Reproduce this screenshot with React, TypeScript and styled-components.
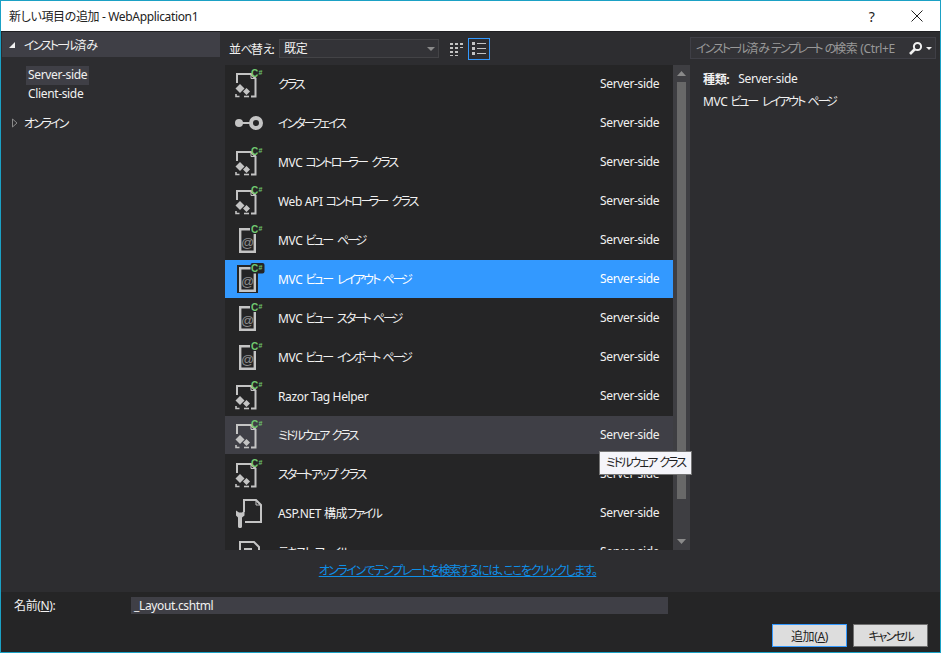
import { FC } from "react";
import styled, { createGlobalStyle } from "styled-components";

type Kind = "class" | "iface" | "view" | "config" | "text";

const items: { id: number; name: string; kind: Kind; state?: "selected" | "hover" }[] = [
  { id: 1, name: "クラス", kind: "class" },
  { id: 2, name: "インターフェイス", kind: "iface" },
  { id: 3, name: "MVC コントローラー クラス", kind: "class" },
  { id: 4, name: "Web API コントローラー クラス", kind: "class" },
  { id: 5, name: "MVC ビュー ページ", kind: "view" },
  { id: 6, name: "MVC ビュー レイアウト ページ", kind: "view", state: "selected" },
  { id: 7, name: "MVC ビュー スタート ページ", kind: "view" },
  { id: 8, name: "MVC ビュー インポート ページ", kind: "view" },
  { id: 9, name: "Razor Tag Helper", kind: "class" },
  { id: 10, name: "ミドルウェア クラス", kind: "class", state: "hover" },
  { id: 11, name: "スタートアップ クラス", kind: "class" },
  { id: 12, name: "ASP.NET 構成ファイル", kind: "config" },
  { id: 13, name: "テキスト ファイル", kind: "text" },
];

const GlobalStyle = createGlobalStyle`
  html, body { margin: 0; padding: 0; background: #2d2d30; }
  body {
    font-family: "Noto Sans", "Noto Sans CJK JP", sans-serif;
    font-size: 12px;
    font-feature-settings: "palt";
    letter-spacing: -0.35px;
  }
`;

// the dialog font has narrow kana, so runs of kana are set tighter than latin text
const Kana = styled.span<{ $long?: boolean }>`
  letter-spacing: ${({ $long }) => ($long ? "-3.5px" : "-2px")};
  word-spacing: ${({ $long }) => ($long ? "6.5px" : "2px")};
`;

const Jp: FC<{ text: string }> = ({ text }) => (
  <>
    {text
      .split(/(ー ?|[\u3040-\u30fb\u30fd-\u30ff][\u3040-\u30fb\u30fd-\u30ff ]*)/)
      .map((part, i) => (i % 2 ? <Kana key={i} $long={part[0] === "ー"}>{part}</Kana> : part))}
  </>
);

const Sharp = styled.text`
  font-family: "Liberation Sans", sans-serif;
  font-weight: 700;
  letter-spacing: 0;
  fill: #70c870;
`;

const Badge: FC<{ selected?: boolean }> = ({ selected }) => (
  <>
    {selected && <rect x="18.5" y="2" width="14" height="10.5" rx="2" fill="#252526" />}
    <Sharp x="19" y="10.5" fontSize="10">C</Sharp>
    <Sharp x="26.5" y="8.5" fontSize="7">#</Sharp>
  </>
);

const ItemIcon: FC<{ kind: Kind; selected?: boolean }> = ({ kind, selected }) => {
  if (kind === "iface") {
    return (
      <Glyph viewBox="0 0 36 37">
        <circle cx="7" cy="18" r="4" fill="#c4c4c4" />
        <rect x="10" y="17" width="8" height="2" fill="#c4c4c4" />
        <circle cx="24" cy="18" r="5" fill="none" stroke="#c4c4c4" strokeWidth="4" />
      </Glyph>
    );
  }
  if (kind === "view") {
    return (
      <Glyph viewBox="0 0 36 37">
        {selected && <rect x="5" y="4" width="21" height="28" fill="#252526" />}
        <path d="M8.2 7.2H22.8V29.8H8.2Z" fill={selected ? "#252526" : "none"} stroke="#c4c4c4" strokeWidth="2.4" />
        {!selected && <rect x="18" y="3" width="14" height="9" fill="#252526" />}
        <AtSign x="15.5" y="24.5" textAnchor="middle" fontSize="13">@</AtSign>
        <Badge selected={selected} />
      </Glyph>
    );
  }
  if (kind === "config") {
    return (
      <Glyph viewBox="0 0 36 37">
        <path d="M12 17V5H24L29 10V27H13" fill="none" stroke="#c4c4c4" strokeWidth="2" />
        <path d="M24 5V10H29" fill="none" stroke="#c4c4c4" strokeWidth="1" />
        <path
          d="M4 15.5V20.5L6 22.5V31.5C6 33.5 10 33.5 10 31.5V22.5L12.5 20.5V15.5L10 17.5H7L4 15.5Z"
          fill="#c4c4c4"
        />
      </Glyph>
    );
  }
  if (kind === "text") {
    return (
      <Glyph viewBox="0 0 36 37">
        <path d="M8 36V8H22L27 13V36" fill="none" stroke="#c4c4c4" strokeWidth="2" />
        <path d="M12 15H20M12 19H23" stroke="#c4c4c4" strokeWidth="2" />
      </Glyph>
    );
  }
  return (
    <Glyph viewBox="0 0 36 37">
      <path d="M5 17V8H19L23.5 12.5V30.5H19" fill="none" stroke="#c4c4c4" strokeWidth="2" />
      <path d="M19 8V12.5H23.5" fill="none" stroke="#c4c4c4" strokeWidth="1" />
      <path d="M8 18L12.5 22.5L8 27L3.5 22.5Z" fill="#c4c4c4" />
      <path d="M14.5 22L18 25.5L14.5 29L11 25.5Z" fill="#c4c4c4" />
      <path d="M12 30.5H17" fill="none" stroke="#c4c4c4" strokeWidth="1.6" />
      <path d="M4 28V30.5H7.5" fill="none" stroke="#c4c4c4" strokeWidth="1.6" />
      <Badge selected={selected} />
    </Glyph>
  );
};

export default function App() {
  return (
    <>
      <GlobalStyle />
      <Window>
        <TitleBar>
          <Title>新しい項目の追加 - WebApplication1</Title>
          <TitleButton $wide>?</TitleButton>
          <TitleButton>
            <svg width="12" height="12" viewBox="0 0 12 12">
              <path d="M0.5 0.5L11.5 11.5M11.5 0.5L0.5 11.5" stroke="#222" strokeWidth="1" />
            </svg>
          </TitleButton>
        </TitleBar>

        <Body>
          <Sidebar>
            <TreeHeader>
              <svg width="8" height="8" viewBox="0 0 8 8">
                <path d="M7 1V7H1Z" fill="#f1f1f1" />
              </svg>
              <span><Jp text="インストール済み" /></span>
            </TreeHeader>
            <SubTree>
              <SubItem $active>Server-side</SubItem>
              <SubItem>Client-side</SubItem>
            </SubTree>
            <TreeRow>
              <svg width="8" height="10" viewBox="0 0 8 10">
                <path d="M1.5 1L6 5L1.5 9Z" fill="none" stroke="#8a8a8a" />
              </svg>
              <span><Jp text="オンライン" /></span>
            </TreeRow>
          </Sidebar>

          <Center>
            <Toolbar>
              <SortLabel><Jp text="並べ替え:" /></SortLabel>
              <SortSelect>
                既定
                <Caret />
              </SortSelect>
              <ViewButton>
                <svg width="16" height="16" viewBox="0 0 16 16" fill="#c4c4c4">
                  <path d="M1 2h3v2H1zM6 2h3v2H6zM11 2h3v2h-3zM1 6h3v2H1zM6 6h3v2H6zM11 6h3v1h-3zM1 10h3v2H1zM6 10h3v2H6zM1 14h3v1H1zM6 14h3v1H6z" />
                </svg>
              </ViewButton>
              <ViewButton $active>
                <svg width="16" height="16" viewBox="0 0 16 16" fill="#c4c4c4">
                  <path d="M1 1h3v3H1zM1 6h3v3H1zM1 11h3v3H1zM6 2h9v1H6zM6 7h9v1H6zM6 12h9v1H6z" />
                </svg>
              </ViewButton>
            </Toolbar>

            <ListArea>
              <List>
                {items.map(({ id, name, kind, state }) => (
                  <Row key={id} $state={state}>
                    <ItemIcon kind={kind} selected={state === "selected"} />
                    <RowName><Jp text={name} /></RowName>
                    <RowType>Server-side</RowType>
                  </Row>
                ))}
              </List>
              <Scrollbar>
                <ScrollArrow viewBox="0 0 9 5">
                  <path d="M4.5 0L9 5H0Z" fill="#8a8a8a" />
                </ScrollArrow>
                <Thumb />
                <ScrollArrow viewBox="0 0 9 5">
                  <path d="M0 0H9L4.5 5Z" fill="#8a8a8a" />
                </ScrollArrow>
              </Scrollbar>
            </ListArea>

            <LinkRow>
              <OnlineLink href="#">オンラインでテンプレートを検索するには、ここをクリックします。</OnlineLink>
            </LinkRow>
          </Center>

          <Details>
            <SearchBox>
              <SearchText><Jp text="インストール済み テンプレート の検索 (Ctrl+E" /></SearchText>
              <svg width="15" height="15" viewBox="0 0 15 15">
                <circle cx="9.5" cy="5.5" r="3.6" fill="none" stroke="#f1f1f1" strokeWidth="2" />
                <path d="M7 8L2 13" stroke="#f1f1f1" strokeWidth="2.6" />
              </svg>
              <SearchCaret />
            </SearchBox>
            <DetailText>
              <DetailLine>
                <b>種類:</b>
                <span>Server-side</span>
              </DetailLine>
              <DetailLine>
                <span><Jp text="MVC ビュー レイアウト ページ" /></span>
              </DetailLine>
            </DetailText>
          </Details>
        </Body>

        <Footer>
          <NameRow>
            <NameLabel>
              名前(<u>N</u>):
            </NameLabel>
            <NameInput>_Layout.cshtml</NameInput>
          </NameRow>
          <Buttons>
            <DialogButton $primary>
              追加(<u>A</u>)
            </DialogButton>
            <DialogButton><Jp text="キャンセル" /></DialogButton>
          </Buttons>
        </Footer>

        <Tooltip><Jp text="ミドルウェア クラス" /></Tooltip>
      </Window>
    </>
  );
}

const Window = styled.div`
  position: relative;
  box-sizing: border-box;
  width: 941px;
  height: 653px;
  border: 1px solid #1ba1c5;
  background: #2d2d30;
  color: #f1f1f1;
  overflow: hidden;
  display: flex;
  flex-direction: column;
`;

const TitleBar = styled.div`
  height: 30px;
  flex: none;
  background: #fff;
  color: #222;
  display: flex;
  align-items: center;
  padding-left: 8px;
`;

const Title = styled.div`
  flex: 1;
  font-size: 12px;
`;

const TitleButton = styled.div<{ $wide?: boolean }>`
  width: 45px;
  height: 30px;
  display: flex;
  align-items: center;
  justify-content: center;
  font-size: 14px;
  margin-right: ${({ $wide }) => ($wide ? "0" : "1px")};
`;

const Body = styled.div`
  height: 561px;
  flex: none;
  display: flex;
  border-top: 1px solid #1f1f22;
  box-sizing: border-box;
`;

const Sidebar = styled.aside`
  width: 219px;
  flex: none;
  padding-left: 1px;
  box-sizing: border-box;
`;

const TreeHeader = styled.div`
  height: 25px;
  background: #3f3f46;
  display: flex;
  align-items: center;
  gap: 8px;
  padding-left: 6px;
`;

const SubTree = styled.div`
  padding: 9px 0 0 24px;
  display: flex;
  flex-direction: column;
  align-items: flex-start;
`;

const SubItem = styled.div<{ $active?: boolean }>`
  height: 19px;
  line-height: 18px;
  padding: 0 2px;
  background: ${({ $active }) => ($active ? "#3f3f46" : "transparent")};
`;

const TreeRow = styled.div`
  display: flex;
  align-items: center;
  gap: 5px;
  padding: 9px 0 0 9px;
  height: 19px;
`;

const Center = styled.main`
  width: 470px;
  flex: none;
  display: flex;
  flex-direction: column;
`;

const Toolbar = styled.div`
  height: 33px;
  flex: none;
  display: flex;
  align-items: center;
  padding-left: 9px;
`;

const SortLabel = styled.span`
  width: 50px;
  white-space: nowrap;
`;

const SortSelect = styled.div`
  position: relative;
  box-sizing: border-box;
  width: 160px;
  height: 19px;
  line-height: 17px;
  padding-left: 4px;
  background: #333337;
  border: 1px solid #434346;
  margin-right: 7px;
`;

const Caret = styled.i`
  position: absolute;
  right: 3px;
  top: 7px;
  border: 4px solid transparent;
  border-top-color: #8a8a8a;
  border-bottom: 0;
`;

const ViewButton = styled.div<{ $active?: boolean }>`
  box-sizing: border-box;
  width: 22px;
  height: 22px;
  display: flex;
  align-items: center;
  justify-content: center;
  border: 1px solid ${({ $active }) => ($active ? "#3399ff" : "transparent")};
`;

const ListArea = styled.div`
  height: 485px;
  flex: none;
  display: flex;
  padding-left: 5px;
`;

const List = styled.div`
  width: 448px;
  height: 485px;
  overflow: hidden;
  background: #252526;
`;

const Row = styled.div<{ $state?: "selected" | "hover" }>`
  height: 38px;
  margin-bottom: 1px;
  display: flex;
  align-items: center;
  padding-left: 7px;
  color: ${({ $state }) => ($state === "selected" ? "#fff" : "#f1f1f1")};
  background: ${({ $state }) =>
    $state === "selected" ? "#3399ff" : $state === "hover" ? "#3f3f46" : "transparent"};
`;

const Glyph = styled.svg`
  width: 36px;
  height: 37px;
  margin-top: 1px;
  flex: none;
`;

const AtSign = styled.text`
  font-family: "Liberation Sans", sans-serif;
  letter-spacing: 0;
  fill: #8f8f8f;
`;

const RowName = styled.span`
  margin-left: 10px;
  flex: 1;
`;

const RowType = styled.span`
  width: 73px;
  flex: none;
  margin-bottom: 2px;
`;

const Scrollbar = styled.div`
  width: 17px;
  flex: none;
  background: #3e3e42;
  display: flex;
  flex-direction: column;
  align-items: center;
  padding: 6px 0;
  box-sizing: border-box;
`;

const ScrollArrow = styled.svg`
  width: 9px;
  height: 5px;
  flex: none;
`;

const Thumb = styled.div`
  width: 9px;
  flex: 1;
  margin: 6px 0 40px;
  background: #686868;
`;

const LinkRow = styled.div`
  flex: 1;
  display: flex;
  align-items: center;
  justify-content: center;
  padding: 0 0 3px 5px;
`;

const OnlineLink = styled.a`
  color: #0e8fe8;
  letter-spacing: -1.5px;
  text-decoration: underline;
  white-space: nowrap;
`;

const Details = styled.aside`
  flex: 1;
  min-width: 0;
`;

const SearchBox = styled.div`
  box-sizing: border-box;
  width: 246px;
  height: 22px;
  margin-top: 5px;
  display: flex;
  align-items: center;
  padding-left: 5px;
  background: #333337;
  border: 1px solid #3f3f46;
`;

const SearchText = styled.span`
  width: 212px;
  flex: none;
  overflow: hidden;
  white-space: nowrap;
  color: #999;
`;

const SearchCaret = styled.i`
  margin-left: 3px;
  border: 3.5px solid transparent;
  border-top-color: #f1f1f1;
  border-bottom: 0;
`;

const DetailText = styled.div`
  padding: 11px 0 0 13px;
  display: flex;
  flex-direction: column;
  gap: 5px;
`;

const DetailLine = styled.div`
  height: 17px;
  display: flex;
  gap: 9px;
  b { font-weight: 700; }
`;

const Footer = styled.footer`
  flex: 1;
  background: #252526;
  display: flex;
  flex-direction: column;
`;

const NameRow = styled.div`
  display: flex;
  align-items: center;
  padding: 4px 0 0 13px;
`;

const NameLabel = styled.label`
  width: 117px;
`;

const NameInput = styled.div`
  box-sizing: border-box;
  width: 537px;
  height: 17px;
  line-height: 17px;
  padding-left: 3px;
  background: #3f3f46;
`;

const Buttons = styled.div`
  display: flex;
  justify-content: flex-end;
  gap: 6px;
  padding: 10px 12px 0 0;
`;

const DialogButton = styled.button<{ $primary?: boolean }>`
  box-sizing: border-box;
  width: 75px;
  height: 23px;
  padding: 0;
  font: inherit;
  letter-spacing: inherit;
  font-feature-settings: inherit;
  color: #1e1e1e;
  background: #dddddd;
  border: 1px solid ${({ $primary }) => ($primary ? "#3399ff" : "#707070")};
  outline: 0;
`;

const Tooltip = styled.div`
  position: absolute;
  left: 598px;
  top: 450px;
  box-sizing: border-box;
  width: 93px;
  height: 24px;
  line-height: 21px;
  text-align: center;
  color: #1e1e1e;
  background: #f5f5fa;
  border: 1px solid #767676;
  white-space: nowrap;
`;
